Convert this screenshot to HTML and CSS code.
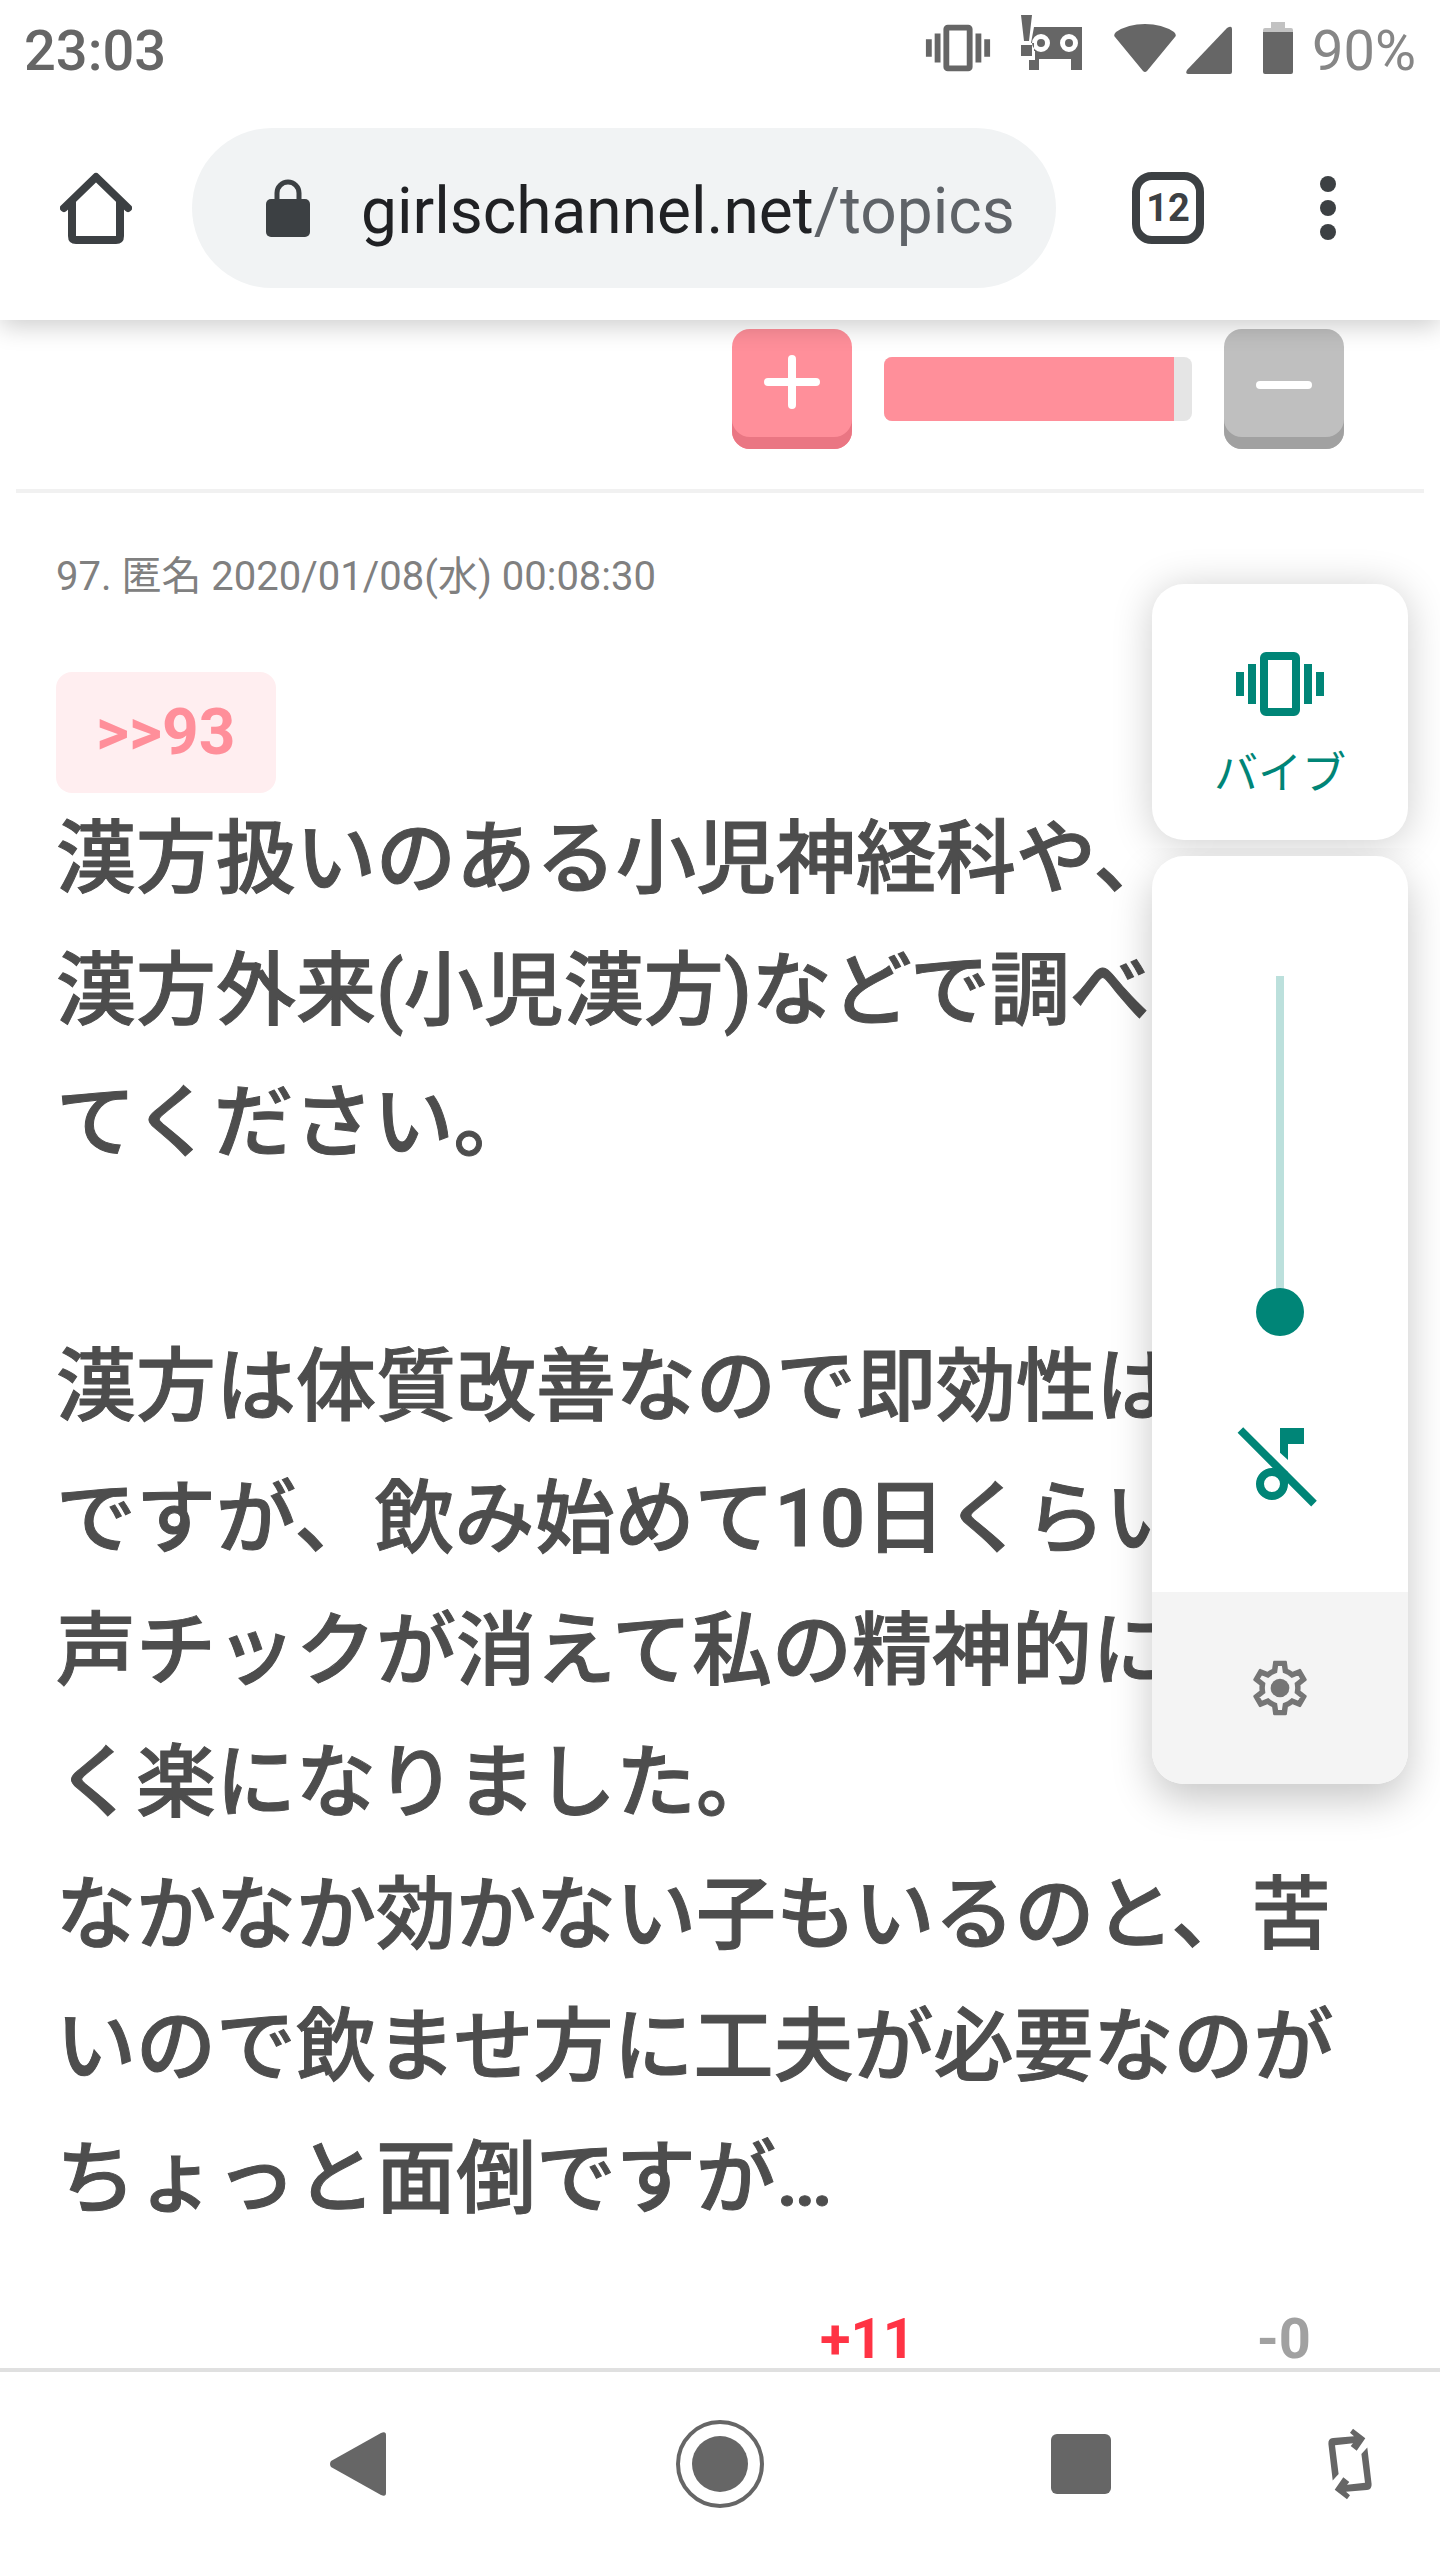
FILE: index.html
```html
<!DOCTYPE html>
<html lang="ja">
<head>
<meta charset="utf-8">
<meta name="viewport" content="width=device-width, initial-scale=1">
<title>girlschannel.net</title>
<link rel="stylesheet" href="styles.css">
</head>
<body>
<div class="screen">
  <header class="chrome">
    <div class="status">
      <time class="clock">23:03</time>
      <div class="status-icons">
        <svg class="st-vibrate" width="70" height="70" viewBox="0 0 24 24" fill="currentColor"><path d="M1 9h2v6H1zM4 7h2v10H4zM18 7h2v10h-2zM21 9h2v6h-2z"/><path fill-rule="evenodd" d="M8.500 4h7A1.500 1.500 0 0 1 17 5.500v13a1.500 1.500 0 0 1-1.500 1.500h-7A1.500 1.500 0 0 1 7 18.500v-13A1.500 1.500 0 0 1 8.500 4zM9 6v12h6V6z"/></svg>
        <svg class="st-robot" width="61" height="56" viewBox="0 0 61 56" fill="currentColor"><path d="M0 0h11L8 26H3zM0 30h11v11H0z"/><path fill-rule="evenodd" d="M13 12h48v43H50V44H18v11H8V45h6V36h-1V28h-3zM20 19a9 9 0 1 0 0 18 9 9 0 0 0 0-18zM48 19a9 9 0 1 0 0 18 9 9 0 0 0 0-18z"/><circle cx="20" cy="28" r="4"/><circle cx="48" cy="28" r="4"/></svg>
        <svg class="st-wifi" width="62" height="50" viewBox="0 0 62 50" fill="currentColor"><path d="M1 14Q-1 12 2 9Q14 1 31 1T60 9Q63 12 61 14L33 48Q31 50 29 48z"/></svg>
        <svg class="st-signal" width="46" height="48" viewBox="0 0 46 48" fill="currentColor"><path d="M1 44L41 2Q46-1 46 3V46Q46 48 44 48H2Q-1 48 1 44z"/></svg>
        <svg class="st-battery" width="30" height="52" viewBox="0 0 30 52"><path fill="#c2c2c2" d="M8 0h14v6h6q2 0 2 2v3H0V8q0-2 2-2h6z"/><path fill="currentColor" d="M0 10h30v40q0 2-2 2H2q-2 0-2-2z"/></svg>
        <span class="percent">90%</span>
      </div>
    </div>
    <div class="toolbar">
      <button class="icon-btn" aria-label="ホーム">
        <svg width="72" height="72" viewBox="0 0 72 72" fill="none" stroke="currentColor" stroke-width="8" stroke-linejoin="round" stroke-linecap="round"><path d="M4 36L36 5l32 31"/><path d="M12 30v34q0 4 4 4h40q4 0 4-4V30"/></svg>
      </button>
      <a class="omnibox" href="#topic">
        <svg width="44" height="58" viewBox="0 0 44 58"><path fill="none" stroke="currentColor" stroke-width="5" d="M11 22V14a11 11 0 0 1 22 0v8"/><rect y="20" width="44" height="38" rx="5" fill="currentColor"/></svg>
        <span class="url">girlschannel.net<span class="path">/topics</span></span>
      </a>
      <button class="tabs" aria-label="タブ">12</button>
      <button class="icon-btn" aria-label="メニュー">
        <svg width="16" height="64" viewBox="0 0 16 64" fill="currentColor"><circle cx="8" cy="8" r="8"/><circle cx="8" cy="32" r="8"/><circle cx="8" cy="56" r="8"/></svg>
      </button>
    </div>
  </header>

  <main class="page" id="topic">
    <div class="vote">
      <button class="vote-btn plus" aria-label="プラス"><svg width="56" height="56" viewBox="0 0 56 56" stroke="#fff" stroke-width="8" stroke-linecap="round"><path d="M4 27h48M28 4v46"/></svg></button>
      <div class="meter"><span class="meter-fill" style="width:94%"></span></div>
      <button class="vote-btn minus" aria-label="マイナス"><svg width="56" height="56" viewBox="0 0 56 56" stroke="#fff" stroke-width="8" stroke-linecap="round"><path d="M4 30h48"/></svg></button>
    </div>
    <article class="comment">
      <p class="meta">97. 匿名 2020/01/08(水) 00:08:30</p>
      <a class="anchor" href="#c93">&gt;&gt;93</a>
      <p class="text">漢方扱いのある小児神経科や、<br>漢方外来(小児漢方)などで調べ<br>てください。<br><br>漢方は体質改善なので即効性は<br>ですが、飲み始めて10日くらい<br>声チックが消えて私の精神的に<br>く楽になりました。<br>なかなか効かない子もいるのと、苦<br>いので飲ませ方に工夫が必要なのが<br>ちょっと面倒ですが…</p>
      <div class="counts"><span class="up">+11</span><span class="down">-0</span></div>
    </article>
  </main>

  <nav class="navbar">
    <button class="nav-btn" aria-label="戻る"><svg width="60" height="64" viewBox="3 0 60 64" fill="currentColor"><path d="M5 29L55 1q5-2 5 2v58q0 4-5 2L5 35q-2-3 0-6z"/></svg></button>
    <button class="nav-btn" aria-label="ホーム画面"><svg width="88" height="88" viewBox="0 0 88 88"><circle cx="44" cy="44" r="42" fill="none" stroke="currentColor" stroke-width="4"/><circle cx="44" cy="44" r="28" fill="currentColor"/></svg></button>
    <button class="nav-btn" aria-label="履歴"><svg width="60" height="60" viewBox="0 0 60 60"><rect width="60" height="60" rx="6" fill="currentColor"/></svg></button>
    <button class="nav-btn rotate" aria-label="画面の回転"><svg width="44" height="72" viewBox="0 0 44 72" fill="currentColor"><g id="turn"><path d="M4.700 52.500L.4 16Q0 10.500 5 10L26 8.200 22 4.700 25 .7 37.300 10.300 28.700 22.700 22.700 18 25 15.300 7 17.300 10.600 46z"/></g><use href="#turn" transform="rotate(180 22 36)"/></svg></button>
  </nav>

  <aside class="volume">
    <button class="card ringer">
      <svg width="96" height="96" viewBox="0 0 24 24" fill="currentColor"><path d="M1 9h2v6H1zM4 7h2v10H4zM18 7h2v10h-2zM21 9h2v6h-2z"/><path fill-rule="evenodd" d="M8.500 4h7A1.500 1.500 0 0 1 17 5.500v13a1.500 1.500 0 0 1-1.500 1.500h-7A1.500 1.500 0 0 1 7 18.500v-13A1.500 1.500 0 0 1 8.500 4zM9 6v12h6V6z"/></svg>
      <span>バイブ</span>
    </button>
    <div class="card slider-card">
      <input class="slider" type="range" min="0" max="15" value="0" aria-label="メディアの音量">
      <button class="mute" aria-label="ミュート"><svg width="96" height="96" viewBox="0 0 24 24" fill="currentColor"><path d="M1.400 4.200L2.800 2.800 21.200 21.200 19.800 22.600zM12 3h6v4h-4v4l-2-1.800z"/><path fill-rule="evenodd" d="M10 13a4 4 0 1 0 4 4v-3l-2-1.500v1A4 4 0 0 0 10 13zM10 15a2 2 0 1 1 0 4 2 2 0 0 1 0-4z"/></svg></button>
      <button class="settings" aria-label="設定"><svg width="66" height="66" viewBox="0 0 24 24"><defs><path id="gear" d="M19.430 12.980c.04-.32.07-.64.07-.98s-.03-.66-.07-.98l2.110-1.650c.19-.15.24-.42.12-.64l-2-3.460c-.12-.22-.39-.3-.61-.22l-2.490 1c-.52-.4-1.080-.73-1.690-.98l-.38-2.650C14.460 2.180 14.250 2 14 2h-4c-.25 0-.46.18-.49.42l-.38 2.650c-.61.25-1.170.59-1.690.98l-2.490-1c-.23-.09-.49 0-.61.22l-2 3.460c-.13.22-.07.49.12.64l2.110 1.650c-.04.32-.07.65-.07.98s.03.66.07.98l-2.110 1.650c-.19.15-.24.42-.12.64l2 3.460c.12.22.39.3.61.22l2.490-1c.52.4 1.080.73 1.690.98l.38 2.650c.03.24.24.42.49.42h4c.25 0 .46-.18.49-.42l.38-2.650c.61-.25 1.170-.59 1.690-.98l2.490 1c.23.09.49 0 .61-.22l2-3.460c.12-.22.07-.49-.12-.64z"/><clipPath id="gear-clip"><use href="#gear"/></clipPath></defs><use href="#gear" fill="none" stroke="currentColor" stroke-width="4" clip-path="url(#gear-clip)"/><circle cx="12" cy="12" r="3.400" fill="currentColor"/></svg></button>
    </div>
  </aside>
</div>
</body>
</html>
```
FILE: styles.css
```css
* { box-sizing: border-box; }

body {
  margin: 0;
  background: #fff;
  font-family: Roboto, "Noto Sans CJK JP", sans-serif;
}

button {
  padding: 0;
  border: 0;
  background: none;
  color: inherit;
  font: inherit;
}

svg { display: block; flex: none; }
a { text-decoration: none; }
p { margin: 0; }

.screen {
  position: relative;
  display: flex;
  flex-direction: column;
  min-height: 100vh;
}

/* Status bar and browser toolbar */
.chrome {
  position: relative;
  z-index: 1;
  background: #fff;
  box-shadow: 0 6px 24px rgba(0, 0, 0, 0.2);
}

.status {
  display: flex;
  align-items: center;
  justify-content: space-between;
  height: 96px;
  padding: 0 24px;
  color: #666;
  font-size: 56px;
}

.clock { padding-top: 6px; font-weight: 500; }

.status-icons { display: flex; align-items: center; }
.st-robot { margin: 0 32px 10px 28px; }
.st-signal { margin: 4px 31px 0 10px; }
.percent { margin-left: 19px; padding-top: 6px; color: #868686; }

.toolbar {
  display: flex;
  align-items: center;
  height: 224px;
  padding: 0 104px 0 60px;
  color: #3c4043;
}

.icon-btn { flex: none; }

.omnibox {
  display: flex;
  flex: 1;
  align-items: center;
  gap: 51px;
  height: 160px;
  margin: 0 76px 0 60px;
  padding: 0 40px 0 74px;
  border-radius: 80px;
  background: #f1f3f4;
  color: inherit;
}

.url {
  overflow: hidden;
  padding-top: 7px;
  color: #202124;
  font-size: 64px;
  white-space: nowrap;
}

.path { color: #5f6368; }

.tabs {
  width: 72px;
  height: 72px;
  margin-right: 116px;
  border: 8px solid #3c4043;
  border-radius: 20px;
  font-size: 38px;
  font-weight: 700;
}

/* Topic page */
.page { flex: 1; }

.vote {
  display: flex;
  align-items: center;
  justify-content: flex-end;
  gap: 32px;
  margin: 0 16px;
  padding: 9px 80px 40px 0;
  border-bottom: 4px solid #f1f1f1;
}

.vote-btn {
  display: grid;
  place-items: center;
  width: 120px;
  height: 120px;
  padding-bottom: 12px;
  border-radius: 18px;
}

.plus { background: #ff8f9a; box-shadow: inset 0 -12px #ea7683; }
.minus { background: #bfbfbf; box-shadow: inset 0 -12px #a1a1a1; }

.meter {
  width: 308px;
  height: 64px;
  overflow: hidden;
  border-radius: 8px;
  background: #e5e5e5;
}

.meter-fill { display: block; height: 100%; background: #ff8f9a; }

.comment { padding: 52px 56px 0; }

.meta {
  color: #808080;
  font-size: 40px;
  line-height: 64px;
}

.anchor {
  display: block;
  width: fit-content;
  margin: 63px 0 0;
  padding: 0 40px;
  border-radius: 16px;
  background: #ffeef0;
  color: #ff8f9a;
  font-size: 64px;
  font-weight: 700;
  line-height: 121px;
}

.text {
  color: #4d4d4d;
  font-size: 80px;
  font-weight: 500;
  line-height: 132px;
  white-space: nowrap;
  -webkit-text-stroke: 1px currentColor;
}

.counts {
  display: flex;
  justify-content: flex-end;
  gap: 342px;
  padding: 66px 73px 0 0;
  font-size: 56px;
  font-weight: 700;
  line-height: 56px;
}

.up { color: #ff3344; }
.down { color: #a1a1a1; }

/* System navigation */
.navbar {
  position: relative;
  display: flex;
  align-items: center;
  justify-content: center;
  gap: 287px;
  height: 192px;
  padding-bottom: 4px;
  border-top: 4px solid #e0e0e0;
  background: #fff;
  color: #666;
}

.rotate { position: absolute; right: 68px; }

/* Volume overlay */
.volume {
  position: absolute;
  z-index: 2;
  top: 584px;
  right: 32px;
  display: grid;
  gap: 16px;
  width: 256px;
  color: #008577;
}

.card {
  border-radius: 32px;
  background: #fff;
  box-shadow: 0 16px 40px rgba(0, 0, 0, 0.22);
}

.ringer {
  position: relative;
  z-index: 1;
  display: flex;
  flex-direction: column;
  align-items: center;
  height: 256px;
  padding-top: 52px;
  box-shadow: 0 4px 40px rgba(0, 0, 0, 0.2);
  font-size: 44px;
  line-height: 84px;
}

.slider-card {
  position: relative;
  z-index: 2;
  display: flex;
  flex-direction: column;
  align-items: center;
  overflow: hidden;
  clip-path: inset(-8px -80px -80px);
}

.slider {
  width: 48px;
  height: 360px;
  margin: 120px 0 80px;
  appearance: none;
  background: linear-gradient(#bce0dc, #bce0dc) center top / 8px 340px no-repeat;
  writing-mode: vertical-lr;
  direction: rtl;
}

.slider::-webkit-slider-thumb {
  width: 48px;
  height: 48px;
  appearance: none;
  border-radius: 50%;
  background: #008577;
}

.settings {
  display: grid;
  place-items: center;
  width: 100%;
  height: 192px;
  margin-top: 80px;
  background: #f4f4f4;
  color: #757575;
}
```
